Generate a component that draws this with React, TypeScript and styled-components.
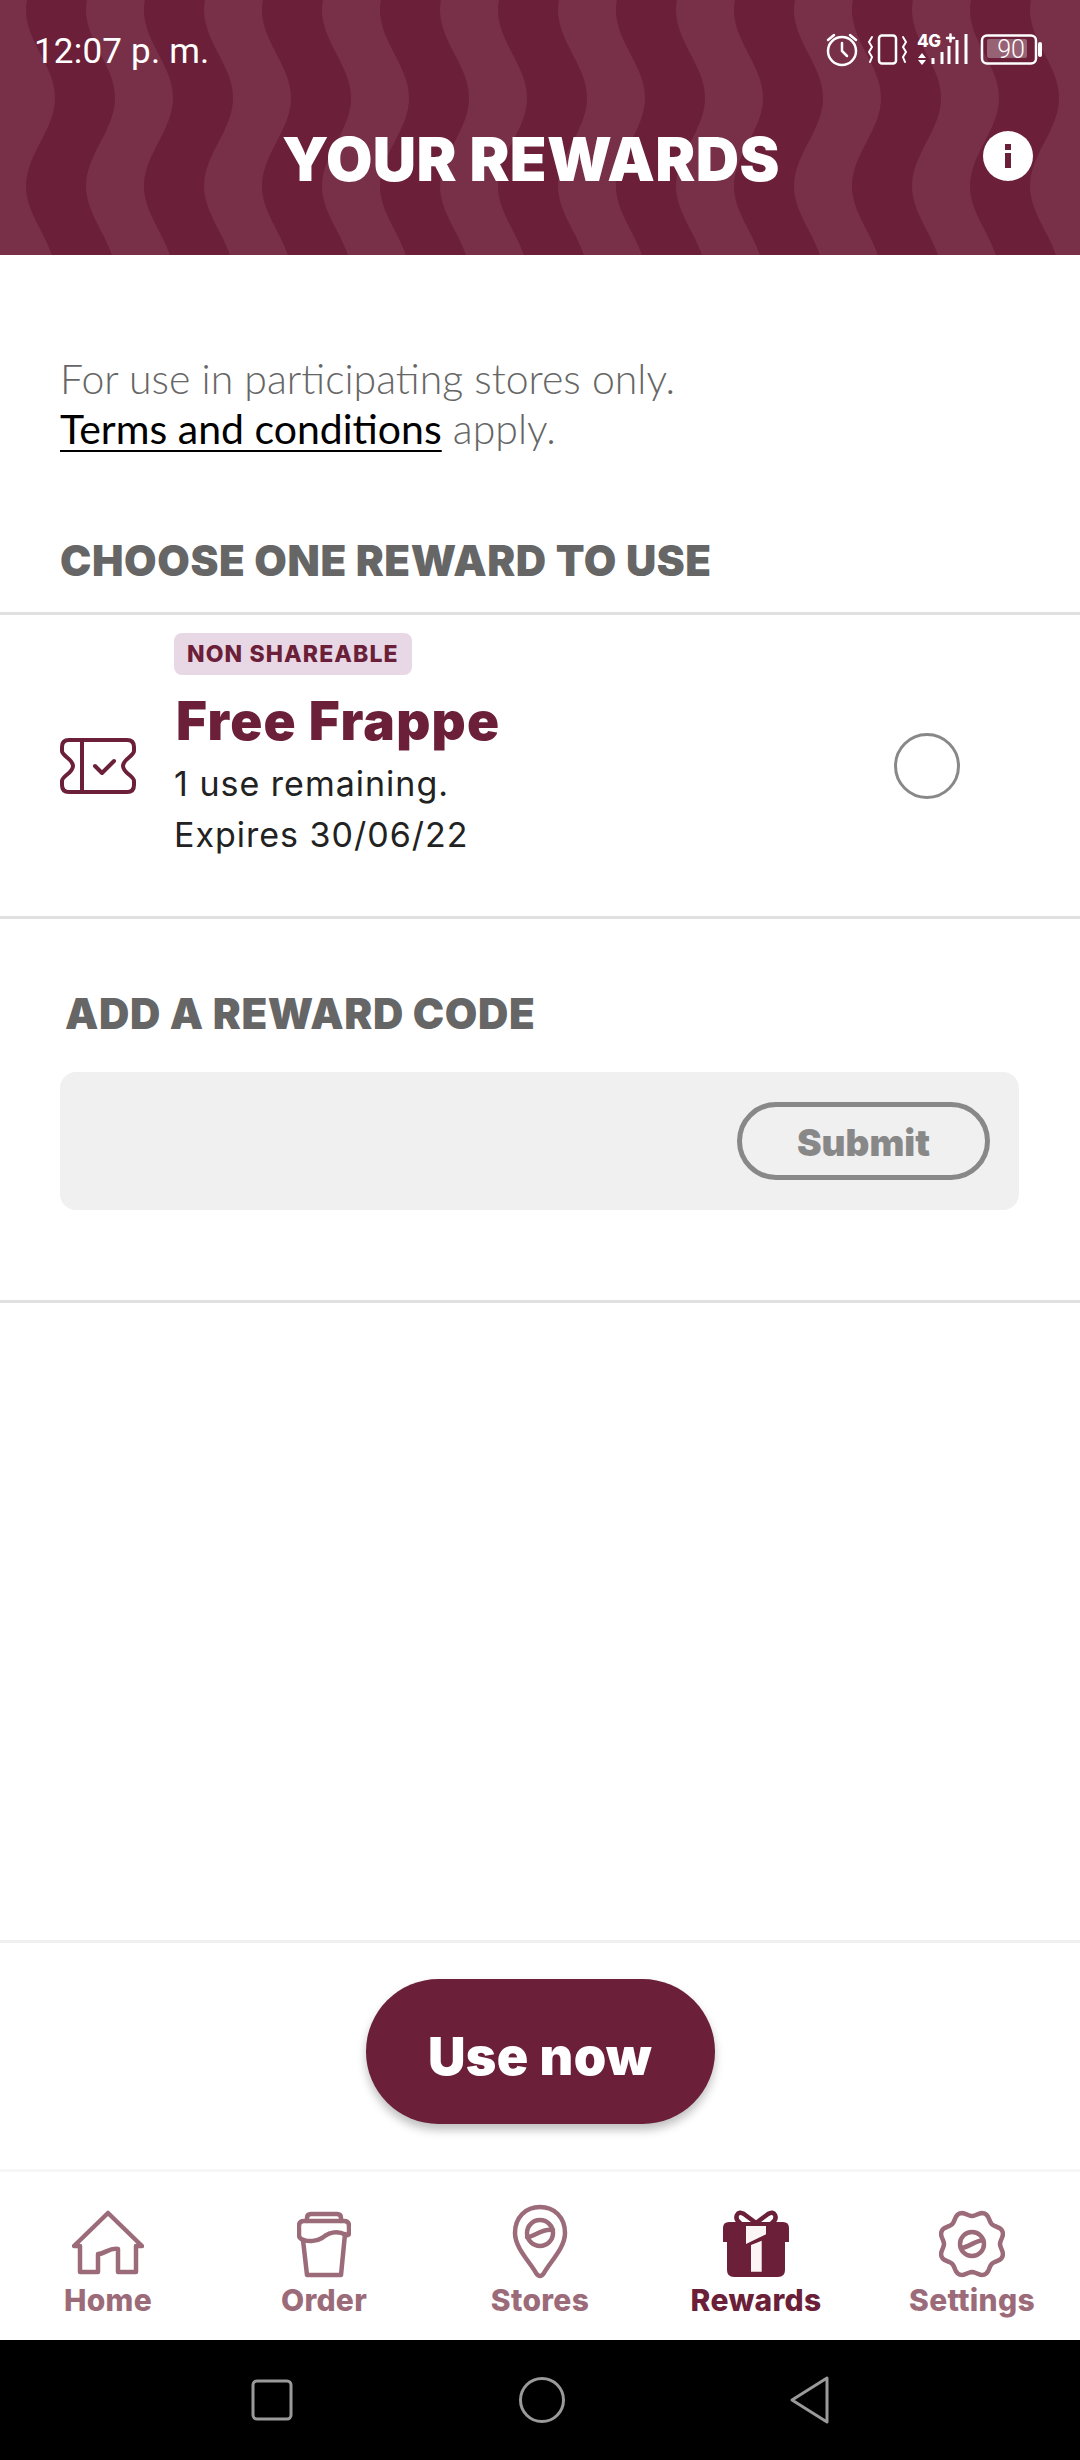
import styled, { createGlobalStyle } from 'styled-components';

const GlobalStyle = createGlobalStyle`
  html, body {
    margin: 0;
    padding: 0;
    background: #ffffff;
  }
  * {
    box-sizing: border-box;
  }
`;

const Screen = styled.div`
  width: 1080px;
  height: 2460px;
  display: flex;
  flex-direction: column;
  background: #ffffff;
  font-family: Inter, 'Liberation Sans', sans-serif;
  overflow: hidden;
`;

const Header = styled.header`
  position: relative;
  height: 255px;
  flex: none;
  background: #6b1f38;
  color: #ffffff;
  overflow: hidden;
`;

const WaveBackdrop = styled.svg`
  position: absolute;
  inset: 0;
`;

const StatusBar = styled.div`
  position: relative;
  height: 102px;
  display: flex;
  align-items: center;
  justify-content: space-between;
  padding: 0 36px 0 34px;
`;

const Clock = styled.span`
  font-family: Roboto, sans-serif;
  font-size: 35px;
  font-weight: 400;
  letter-spacing: 0.2px;
`;

const StatusIcons = styled.svg`
  display: block;
  overflow: visible;
`;

const TitleRow = styled.div`
  position: relative;
  height: 113px;
  display: flex;
  align-items: center;
  justify-content: center;
  padding: 0 18px 0 0;
`;

const Title = styled.h1`
  margin: 0;
  font-size: 60px;
  font-weight: 900;
  letter-spacing: 0.4px;
`;

const InfoButton = styled.svg`
  position: absolute;
  right: 47px;
  top: 29px;
`;

const Notice = styled.p`
  margin: 0;
  padding: 99px 60px 0;
  font-family: Lato, sans-serif;
  font-size: 41px;
  font-weight: 300;
  line-height: 50px;
  color: #666666;
`;

const TermsLink = styled.a`
  color: #000000;
  font-weight: 400;
  text-decoration: underline;
  text-underline-offset: 6px;
  text-decoration-thickness: 2px;
`;

const SectionHeading = styled.h2<{ $inset: number; $top: number; $bottom: number }>`
  margin: 0;
  padding: ${(p) => p.$top}px 0 ${(p) => p.$bottom}px ${(p) => p.$inset}px;
  font-size: 42px;
  line-height: 50px;
  font-weight: 900;
  letter-spacing: 0.6px;
  color: #666666;
`;

const Divider = styled.div<{ $tone?: string }>`
  height: 3px;
  flex: none;
  background: ${(p) => p.$tone ?? '#e0e0e0'};
`;

const RewardRow = styled.div`
  height: 301px;
  display: flex;
  align-items: center;
  padding: 0 60px;
`;

const TicketIcon = styled.svg`
  flex: none;
  margin-right: 38px;
`;

const RewardInfo = styled.div`
  flex: 1;
  align-self: flex-start;
  padding-top: 18px;
  display: flex;
  flex-direction: column;
  align-items: flex-start;
`;

const Badge = styled.span`
  height: 42px;
  padding: 0 13px;
  display: flex;
  align-items: center;
  border-radius: 8px;
  background: #e8d8e6;
  color: #6b1f38;
  font-size: 23px;
  font-weight: 800;
  letter-spacing: 1.1px;
`;

const RewardName = styled.div`
  margin: 15px 0 0 2px;
  font-size: 53px;
  line-height: 62px;
  font-weight: 900;
  color: #6b1f38;
  letter-spacing: 1.25px;
`;

const RewardMeta = styled.div`
  margin-top: 6px;
  font-size: 34px;
  line-height: 51px;
  letter-spacing: 1px;
  color: #222222;
`;

const Radio = styled.span`
  width: 66px;
  height: 66px;
  margin-right: 60px;
  flex: none;
  border-radius: 50%;
  border: 3px solid #888888;
`;

const CodeBox = styled.div`
  height: 138px;
  margin: 0 61px 0 60px;
  padding: 0 29px 0 0;
  display: flex;
  align-items: center;
  justify-content: flex-end;
  border-radius: 16px;
  background: #f0f0f0;
`;

const SubmitButton = styled.button`
  width: 253px;
  height: 78px;
  padding: 3px 0 0;
  border-radius: 39px;
  border: 5px solid #888888;
  background: transparent;
  color: #888888;
  font-family: inherit;
  font-size: 37px;
  font-weight: 900;
`;

const Spacer = styled.div<{ $size?: number }>`
  flex: ${(p) => (p.$size ? `0 0 ${p.$size}px` : 1)};
`;

const ActionArea = styled.div`
  height: 226px;
  flex: none;
  display: flex;
  justify-content: center;
  padding-top: 36px;
`;

const UseNowButton = styled.button`
  width: 349px;
  height: 145px;
  padding: 10px 0 0;
  border: 0;
  border-radius: 73px;
  background: #6b1f38;
  color: #ffffff;
  font-family: inherit;
  font-size: 52px;
  font-weight: 900;
  letter-spacing: 0.4px;
  box-shadow: 0 6px 10px rgba(0, 0, 0, 0.25);
`;

const TabBar = styled.nav`
  height: 168px;
  flex: none;
  display: grid;
  grid-template-columns: repeat(5, 1fr);
  padding-top: 36px;
  background: #ffffff;
`;

const Tab = styled.div<{ $active?: boolean }>`
  display: flex;
  flex-direction: column;
  align-items: center;
  color: ${(p) => (p.$active ? '#6b1f38' : '#9c6b7a')};
`;

const TabIcon = styled.svg`
  display: block;
  height: 72px;
`;

const PinIcon = styled(TabIcon)`
  height: 76px;
  margin-top: -4px;
`;

const TabLabel = styled.span`
  margin-top: 2px;
  font-size: 30px;
  line-height: 36px;
  font-weight: 800;
  letter-spacing: 0.3px;
`;

const SystemBar = styled.div`
  height: 120px;
  flex: none;
  display: flex;
  align-items: center;
  justify-content: center;
  gap: 225px;
  background: #000000;
`;

const SystemIcon = styled.svg`
  display: block;
  color: #9a9a9a;
`;

// each stripe follows the same sine, shifted along x
function wavePath(x0: number, width: number) {
  const left: string[] = [];
  const right: string[] = [];
  for (let y = -6; y <= 262; y += 6) {
    const dx = -14.5 - 14.5 * Math.cos((2 * Math.PI * (y - 10)) / 176);
    left.push(`${(x0 + dx).toFixed(1)},${y}`);
    right.unshift(`${(x0 + width + dx).toFixed(1)},${y}`);
  }
  return `M${left.join(' L')} L${right.join(' L')} Z`;
}

const stripes = Array.from({ length: 11 }, (_, i) => -3 + i * 118);

function HomeGlyph() {
  return (
    <TabIcon viewBox="0 0 72 72" width="72" fill="none" stroke="currentColor" strokeWidth="4.5" strokeLinejoin="round" strokeLinecap="round">
      <path d="M36 5 L2 38 H8 V64 H26 V46 C33 46 38 39 46 41 V64 H64 V38 H70 Z" />
    </TabIcon>
  );
}

function CupGlyph() {
  return (
    <TabIcon viewBox="0 0 54 72" width="54" fill="none" stroke="currentColor" strokeWidth="4.5" strokeLinejoin="round" strokeLinecap="round">
      <g transform="translate(0 4)">
        <path d="M10 9 V6 Q10 2 14 2 H40 Q44 2 44 6 V9" />
        <path d="M7 9 H47 Q52 9 52 14 V21 Q52 24 49 23 C38 17 30 22 25 26 C20 29 12 30 7 28 Q2 27 2 23 V14 Q2 9 7 9 Z" />
        <path d="M6 28 L10 63 H44 L48 22" />
      </g>
    </TabIcon>
  );
}

function PinGlyph() {
  return (
    <PinIcon viewBox="0 0 56 76" width="56" fill="none" stroke="currentColor" strokeWidth="4.5" strokeLinejoin="round" strokeLinecap="round">
      <path d="M28 72 Q26 72 24 69 C18 58 3 44 3 29 C3 13 14 3 28 3 C42 3 53 13 53 29 C53 44 38 58 32 69 Q30 72 28 72 Z" />
      <circle cx="28" cy="29" r="13" />
      <path d="M15 33 C22 33 30 24 41 26" />
    </PinIcon>
  );
}

function GiftGlyph() {
  return (
    <TabIcon viewBox="0 0 68 72" width="68">
      <path fill="currentColor" d="M7 14 H61 Q67 14 67 20 V34 H63 V62 Q63 69 56 69 H12 Q5 69 5 62 V34 H1 V20 Q1 14 7 14 Z" />
      <path fill="none" stroke="currentColor" strokeWidth="4.5" strokeLinecap="round" d="M34 15 L22 6 Q17 3 15 7 Q13 11 18 15 M34 15 L46 6 Q51 3 53 7 Q55 11 50 15" />
      <path fill="#fbf5f6" d="M24 18 H44 V26.3 L24 36 Z" />
      <path fill="#fbf5f6" d="M29 37 L39.7 32.7 V63.7 H29 Z" />
    </TabIcon>
  );
}

function GearGlyph() {
  const r = (a: number) => 30.5 - 2.5 * Math.cos(8 * a);
  const pts: string[] = [];
  for (let i = 0; i <= 96; i++) {
    const a = (i / 96) * 2 * Math.PI;
    pts.push(`${(33 + r(a) * Math.sin(a)).toFixed(1)},${(36 - r(a) * Math.cos(a)).toFixed(1)}`);
  }
  return (
    <TabIcon viewBox="0 0 66 72" width="66" fill="none" stroke="currentColor" strokeWidth="4.5" strokeLinejoin="round" strokeLinecap="round">
      <path d={`M${pts.join(' L')} Z`} />
      <circle cx="33" cy="36" r="12" />
      <path d="M22 40 C28 40 36 33 44 32" />
    </TabIcon>
  );
}

export default function App() {
  return (
    <Screen>
      <GlobalStyle />
      <Header>
        <WaveBackdrop width="1080" height="255" viewBox="0 0 1080 255">
          {stripes.map((x) => (
            <path key={x} d={wavePath(x, 58)} fill="#773047" />
          ))}
        </WaveBackdrop>
        <StatusBar>
          <Clock>12:07 p. m.</Clock>
          <StatusIcons width="218" height="36" viewBox="0 0 218 36" fill="none" stroke="#ffffff" strokeWidth="2.5" strokeLinecap="round">
            <circle cx="16" cy="18" r="14" />
            <path d="M16 10 V18 L21 23 M2 7 L8 2 M30 7 L24 2" />
            <rect x="53" y="2.5" width="17" height="28" rx="3" />
            <path d="M46 4 L43 9 L46 14 L43 19 L46 24 L44 29 M77 4 L80 9 L77 14 L80 19 L77 24 L79 29" strokeWidth="2" />
            <text x="91" y="14" fill="#ffffff" stroke="none" fontFamily="Inter, sans-serif" fontSize="17" fontWeight="800" letterSpacing="-0.5">
              4G
            </text>
            <path d="M121 5 H128 M124.5 1.5 V8.5" />
            <path d="M96 20 L100 25 H92 Z M96 32 L100 27 H92 Z" fill="#ffffff" stroke="none" />
            <path d="M107 31 V25 M116 31 V19 M123 31 V13 M131 31 V7 M140 31 V1" strokeWidth="3" strokeLinecap="butt" />
            <rect x="156" y="2.5" width="54" height="28" rx="5" />
            <rect x="161" y="6" width="40" height="19" rx="2" fill="#ffffff" fillOpacity="0.3" stroke="none" />
            <path d="M214 11 V22" strokeWidth="4" />
            <text x="185" y="25" fill="#ffffff" stroke="none" textAnchor="middle" fontFamily="Roboto, sans-serif" fontSize="25" fontWeight="300">
              90
            </text>
          </StatusIcons>
        </StatusBar>
        <TitleRow>
          <Title>YOUR REWARDS</Title>
          <InfoButton width="50" height="50" viewBox="0 0 50 50">
            <circle cx="25" cy="25" r="25" fill="#ffffff" />
            <rect x="22" y="13" width="6" height="6" fill="#6b1f38" />
            <rect x="22" y="22" width="6" height="15" fill="#6b1f38" />
          </InfoButton>
        </TitleRow>
      </Header>

      <Notice>
        For use in participating stores only.
        <br />
        <TermsLink>Terms and conditions</TermsLink> apply.
      </Notice>

      <SectionHeading $inset={60} $top={82} $bottom={26}>
        CHOOSE ONE REWARD TO USE
      </SectionHeading>
      <Divider />

      <RewardRow>
        <TicketIcon width="76" height="56" viewBox="0 0 76 56" fill="none" stroke="#6b1f38" strokeWidth="4" strokeLinejoin="round" strokeLinecap="round">
          <path d="M9 2 H67 Q74 2 74 9 V13 C74 18 63 21 63 28 C63 35 74 38 74 43 V47 Q74 54 67 54 H9 Q2 54 2 47 V43 C2 38 13 35 13 28 C13 21 2 18 2 13 V9 Q2 2 9 2 Z" />
          <path d="M22 2 V54" />
          <path d="M35 28 L42 35 L54 23" />
        </TicketIcon>
        <RewardInfo>
          <Badge>NON SHAREABLE</Badge>
          <RewardName>Free Frappe</RewardName>
          <RewardMeta>
            1 use remaining.
            <br />
            Expires 30/06/22
          </RewardMeta>
        </RewardInfo>
        <Radio />
      </RewardRow>
      <Divider />

      <SectionHeading $inset={65} $top={70} $bottom={33}>
        ADD A REWARD CODE
      </SectionHeading>
      <CodeBox>
        <SubmitButton>Submit</SubmitButton>
      </CodeBox>
      <Spacer $size={90} />
      <Divider />

      <Spacer />
      <Divider $tone="#f0f0f0" />
      <ActionArea>
        <UseNowButton>Use now</UseNowButton>
      </ActionArea>
      <Divider $tone="#f6f6f6" />

      <TabBar>
        <Tab>
          <HomeGlyph />
          <TabLabel>Home</TabLabel>
        </Tab>
        <Tab>
          <CupGlyph />
          <TabLabel>Order</TabLabel>
        </Tab>
        <Tab>
          <PinGlyph />
          <TabLabel>Stores</TabLabel>
        </Tab>
        <Tab $active>
          <GiftGlyph />
          <TabLabel>Rewards</TabLabel>
        </Tab>
        <Tab>
          <GearGlyph />
          <TabLabel>Settings</TabLabel>
        </Tab>
      </TabBar>

      <SystemBar>
        <SystemIcon width="44" height="44" viewBox="0 0 44 44" fill="none" stroke="currentColor" strokeWidth="3">
          <rect x="3" y="3" width="38" height="38" rx="4" />
        </SystemIcon>
        <SystemIcon width="46" height="46" viewBox="0 0 46 46" fill="none" stroke="currentColor" strokeWidth="3">
          <circle cx="23" cy="23" r="21.5" />
        </SystemIcon>
        <SystemIcon width="40" height="48" viewBox="0 0 40 48" fill="none" stroke="currentColor" strokeWidth="3" strokeLinejoin="round">
          <path d="M2 24 L37 2 V46 Z" />
        </SystemIcon>
      </SystemBar>
    </Screen>
  );
}
